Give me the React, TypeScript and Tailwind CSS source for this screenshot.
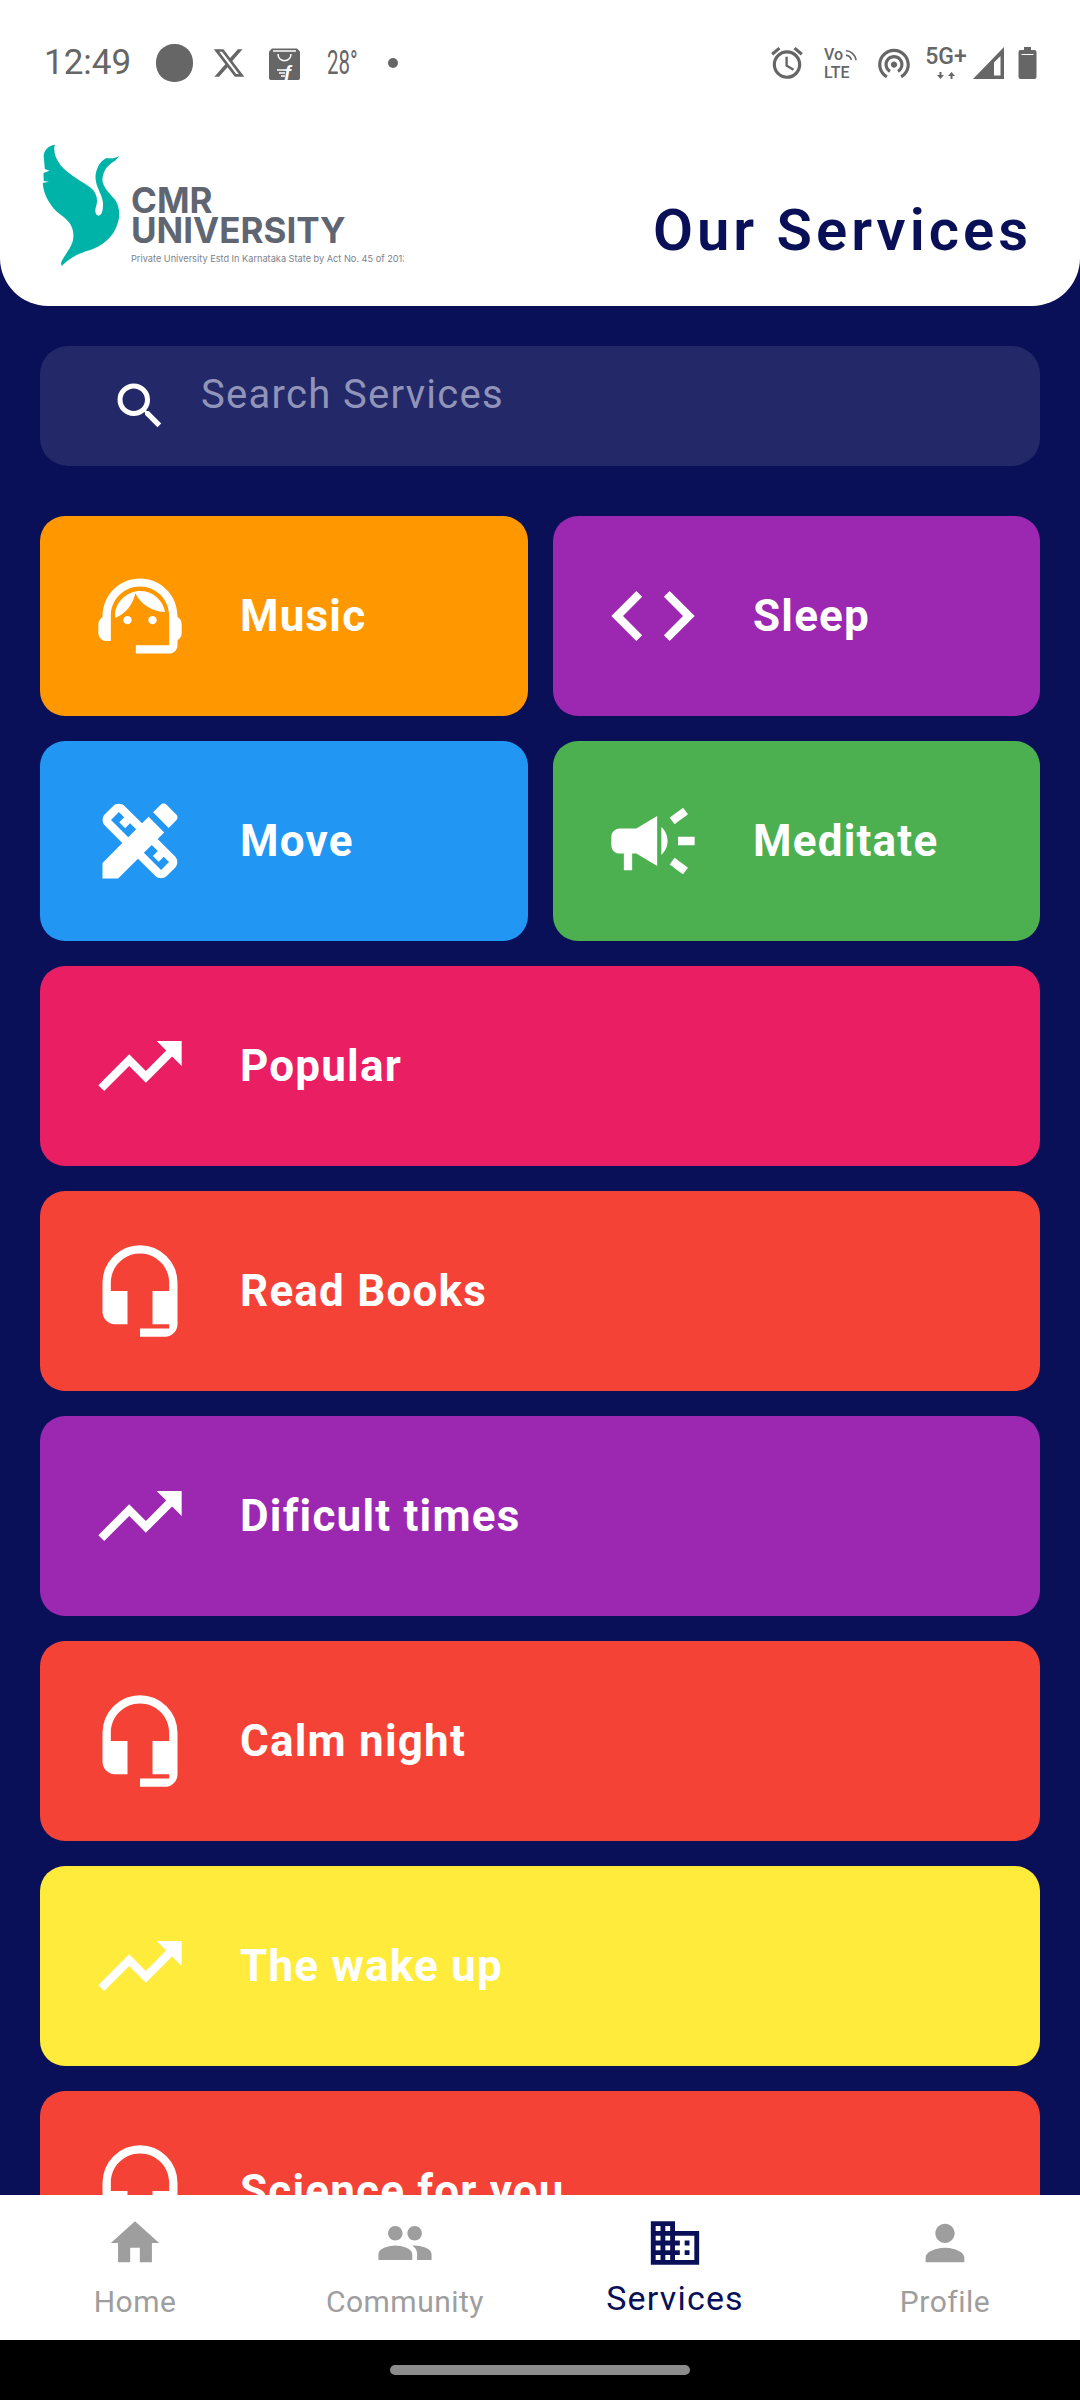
import type { ComponentType, ReactNode } from "react";
import { FaXTwitter } from "react-icons/fa6";
import {
  MdAccessAlarm,
  MdCampaign,
  MdCode,
  MdDesignServices,
  MdDomain,
  MdHeadsetMic,
  MdHome,
  MdPeople,
  MdPerson,
  MdSearch,
  MdSupportAgent,
  MdTrendingUp,
  MdWifiTethering,
} from "react-icons/md";

type Icon = ComponentType<{ className?: string }>;

const smallCards: { label: string; icon: Icon; color: string }[] = [
  { label: "Music", icon: MdSupportAgent, color: "bg-[#ff9800]" },
  { label: "Sleep", icon: MdCode, color: "bg-[#9c27b0]" },
  { label: "Move", icon: MdDesignServices, color: "bg-[#2196f3]" },
  { label: "Meditate", icon: MdCampaign, color: "bg-[#4caf50]" },
];

const wideCards: { label: string; icon: Icon; color: string }[] = [
  { label: "Popular", icon: MdTrendingUp, color: "bg-[#e91e63]" },
  { label: "Read Books", icon: MdHeadsetMic, color: "bg-[#f44336]" },
  { label: "Dificult times", icon: MdTrendingUp, color: "bg-[#9c27b0]" },
  { label: "Calm night", icon: MdHeadsetMic, color: "bg-[#f44336]" },
  { label: "The wake up", icon: MdTrendingUp, color: "bg-[#ffeb3b]" },
  { label: "Science for you", icon: MdHeadsetMic, color: "bg-[#f44336]" },
];

function StatusBar() {
  return (
    <div className="mt-[44px] flex h-[38px] items-center justify-between pl-[44px] pr-[43px] text-[#666666]">
      <div className="flex items-center">
        <span className="w-[88px] text-[35px] leading-[38px]">12:49</span>
        {/* notification blob */}
        <div className="ml-[24px] h-[38px] w-[37px] rounded-[48%] bg-[#666666]" />
        <FaXTwitter className="ml-[19px] h-[34px] w-[34px]" />
        {/* flipkart bag */}
        <svg viewBox="0 0 31 33" className="ml-[22px] h-[33px] w-[33px]">
          <path d="M3 1.500h25l3 3V31a2 2 0 0 1-2 2H2a2 2 0 0 1-2-2V4.500z" fill="#666666" />
          <path d="M4 4h23" stroke="#ffffff" strokeWidth="1.500" />
          <path d="M9 7c0 9 13 9 13 0" stroke="#ffffff" strokeWidth="1.500" fill="none" />
          <path d="M8 23h8M10 26h6M12 29h4" stroke="#ffffff" strokeWidth="1.500" />
          <text x="15" y="33" fontFamily="Liberation Sans, sans-serif" fontSize="20" fontWeight="700" fontStyle="italic" fill="#ffffff">
            f
          </text>
        </svg>
        <span className="ml-[26px] w-[30px] origin-left scale-x-[0.62] text-[33px] leading-[38px] whitespace-nowrap">28°</span>
        <div className="ml-[31px] h-[10px] w-[10px] rounded-full bg-[#666666]" />
      </div>
      <div className="flex items-center">
        <MdAccessAlarm className="h-[38px] w-[38px]" />
        <div className="relative ml-[18px] flex h-[32px] w-[29px] flex-col text-[16px] leading-[15px] font-medium">
          <span>Vo</span>
          <span className="mt-[3px]">LTE</span>
          <svg viewBox="0 0 14 14" className="absolute -right-[5px] top-[1px] h-[13px] w-[13px]" fill="none" stroke="#666666" strokeWidth="1.800">
            <path d="M1 3c5 0 10 4 11 10" />
            <path d="M1 8c3 0 5 2 6 5" />
          </svg>
        </div>
        <MdWifiTethering className="ml-[22px] h-[38px] w-[38px]" />
        <div className="ml-[13px] flex w-[40px] flex-col items-center">
          <span className="text-[23px] leading-[20px] font-medium whitespace-nowrap">5G+</span>
          <svg viewBox="0 0 20 9" className="mt-[4px] h-[9px] w-[20px]" fill="#666666">
            <path d="M1 4h2.500V1h2v3H8L4.500 8zM12 5l3.500-4L19 5h-2.500v3h-2V5z" />
          </svg>
        </div>
        <svg viewBox="0 0 31 32" className="ml-[7px] h-[32px] w-[31px]">
          <path d="M31 0v32H0zM27.500 9 21 15.500V28.500h6.500z" fill="#666666" fillRule="evenodd" />
        </svg>
        <svg viewBox="0 0 18 32" className="ml-[14px] h-[32px] w-[19px]">
          <path d="M5.500 0h7v3H16a2 2 0 0 1 2 2v25a2 2 0 0 1-2 2H2a2 2 0 0 1-2-2V5a2 2 0 0 1 2-2h3.500z" fill="#666666" />
          <path d="M3 7.500h12" stroke="#ffffff" strokeWidth="1" />
        </svg>
      </div>
    </div>
  );
}

function Logo() {
  return (
    <div className="flex">
      <svg viewBox="120 430 235 375" preserveAspectRatio="none" className="ml-[41px] h-[125px] w-[81px] shrink-0">
        <path
          fill="#00b3a8"
          d="M160 435C140 438 126 455 128 472L131 508 145 513 127 520 128 544 143 546 125 550C128 590 150 625 178 646 205 665 220 690 212 725 205 750 185 770 178 790L180 800C195 782 215 768 250 755 285 745 318 725 335 690 352 655 350 625 335 600 318 578 300 565 298 540 300 510 315 495 335 483L348 468C335 477 322 476 310 475 290 485 278 510 278 535 280 565 298 585 300 610 300 630 298 645 288 648 278 648 275 635 280 620 286 600 282 580 265 565 240 545 200 525 178 498 162 478 155 455 160 435Z"
        />
      </svg>
      <div className="ml-[9px] w-[273px] overflow-hidden pt-[42px] font-['Inter',sans-serif] text-[#5f6672]">
        <div className="text-[35px] leading-[30px] font-bold">CMR</div>
        <div className="text-[35px] leading-[30px] font-bold">UNIVERSITY</div>
        <div className="mt-[6px] text-[9.2px] leading-[16px] whitespace-nowrap text-[#7c828c]">
          Private University Estd In Karnataka State by Act No. 45 of 2013
        </div>
      </div>
    </div>
  );
}

function Card({ label, icon: IconEl, color }: { label: string; icon: Icon; color: string }) {
  return (
    <div className={`flex h-[200px] items-center rounded-[25px] pl-[50px] ${color}`}>
      <IconEl className="h-[100px] w-[100px] shrink-0 text-white" />
      <span className="ml-[50px] text-[44px] leading-[52px] font-bold tracking-[1.2px] whitespace-nowrap text-white">{label}</span>
    </div>
  );
}

function NavItem({ icon: IconEl, children, active }: { icon: Icon; children: ReactNode; active?: boolean }) {
  return (
    <div className="flex flex-col items-center pt-[19px]">
      <IconEl className={`h-[58px] w-[58px] ${active ? "text-[#0a1058]" : "text-[#9e9e9e]"}`} />
      {active ? (
        <span className="mt-[7px] text-[34px] leading-[38px] tracking-[1.2px] text-[#0a1058]">{children}</span>
      ) : (
        <span className="mt-[12px] text-[30px] leading-[36px] tracking-[0.5px] text-[#9e9e9e]">{children}</span>
      )}
    </div>
  );
}

export default function App() {
  return (
    <div className="flex h-[2400px] w-[1080px] flex-col overflow-hidden bg-[#0a1058] font-['Roboto',sans-serif]">
      {/* Header */}
      <header className="h-[306px] shrink-0 rounded-b-[48px] bg-white">
        <StatusBar />
        <div className="mt-[61px] flex items-start justify-between pr-[48px]">
          <Logo />
          <h1 className="mt-[55px] text-[58px] leading-[64px] font-semibold tracking-[4px] text-[#0a1058]">Our Services</h1>
        </div>
      </header>

      {/* Scrolling content */}
      <main className="min-h-0 flex-1 overflow-hidden px-[40px] pt-[40px]">
        <div className="flex h-[120px] rounded-[28px] bg-[#232968] pl-[70px]">
          <MdSearch className="mt-[30px] h-[60px] w-[60px] text-white" />
          <span className="ml-[31px] mt-[25px] text-[40px] leading-[48px] tracking-[1.3px] text-[#9194b8]">Search Services</span>
        </div>
        <div className="mt-[50px] grid grid-cols-[488px_487px] gap-[25px]">
          {smallCards.map((c) => (
            <Card key={c.label} {...c} />
          ))}
        </div>
        <div className="mt-[25px] flex flex-col gap-[25px]">
          {wideCards.map((c) => (
            <Card key={c.label} {...c} />
          ))}
        </div>
      </main>

      {/* Bottom navigation */}
      <nav className="grid h-[145px] shrink-0 grid-cols-4 bg-white">
        <NavItem icon={MdHome}>Home</NavItem>
        <NavItem icon={MdPeople}>Community</NavItem>
        <NavItem icon={MdDomain} active>
          Services
        </NavItem>
        <NavItem icon={MdPerson}>Profile</NavItem>
      </nav>

      {/* Gesture bar */}
      <div className="flex h-[60px] shrink-0 items-center justify-center bg-black">
        <div className="h-[10px] w-[300px] rounded-full bg-[#8c8c8c]" />
      </div>
    </div>
  );
}
